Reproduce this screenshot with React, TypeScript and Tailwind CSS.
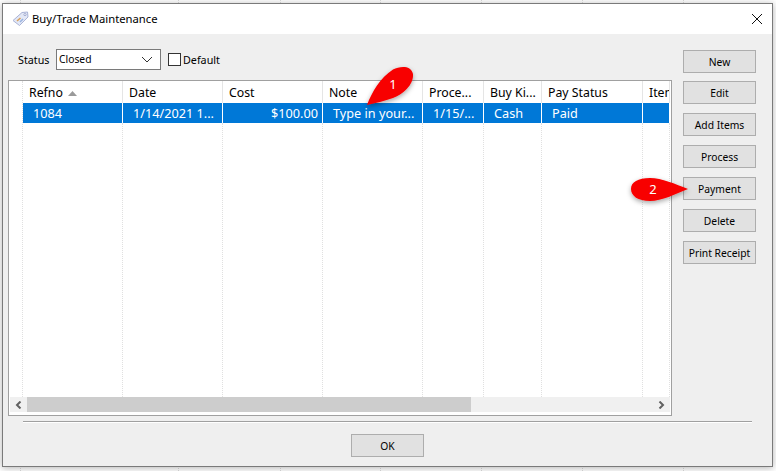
const font = { fontFamily: '"Noto Sans", sans-serif' };

const columns = [
  { label: "Refno", value: "1084", w: "w-[100px]", align: "pl-[10px]", sort: true },
  { label: "Date", value: "1/14/2021 1...", w: "w-[100px]", align: "pl-[10px]" },
  { label: "Cost", value: "$100.00", w: "w-[100px]", align: "justify-end pr-1" },
  { label: "Note", value: "Type in your...", w: "w-[100px]", align: "pl-[10px]" },
  { label: "Proce...", value: "1/15/...", w: "w-[61px]", align: "pl-[10px]" },
  { label: "Buy Ki...", value: "Cash", w: "w-[58px]", align: "pl-[10px]" },
  { label: "Pay Status", value: "Paid", w: "w-[101px]", align: "pl-[10px]" },
  { label: "Item", value: "", w: "w-[27px]", align: "pl-[10px]" },
];

const gridLines = ["left-[20px]", "left-[178px]", "left-[280px]", "left-[380px]", "left-[481px]", "left-[582px]", "left-[683px]"];

function Btn({ children }: { children: React.ReactNode }) {
  return (
    <button className="w-[73px] h-[23px] pt-[2px] flex items-center justify-center border border-[#adadad] bg-[#e1e1e1] text-[10.3px] text-black whitespace-nowrap">
      {children}
    </button>
  );
}

function TagIcon() {
  return (
    <svg width="17" height="16" viewBox="0 0 17 16" className="shrink-0">
      <path d="M1 9.5 10 1.5 15.5 1 16 6 7.5 14.5Z" fill="#e3e8f6" stroke="#a9b3d6" strokeWidth="1" />
      <circle cx="13" cy="3.6" r="1.1" fill="#fff" stroke="#8f9bc5" strokeWidth="0.8" />
      <path d="M5 10 8.5 7" stroke="#d9a05a" strokeWidth="1.6" />
      <path d="M8 11 11 8" stroke="#9bb4e0" strokeWidth="1.6" />
    </svg>
  );
}

export default function App() {
  return (
    <div className="relative w-[776px] h-[471px] overflow-hidden bg-white pt-[3px] pl-[2px]" style={font}>
      {gridLines.map((l) => (
        <span key={l} className={`absolute ${l} top-0 h-[471px] border-l border-dotted border-[#dcdcdc]`} />
      ))}
      <div className="relative w-[771px] h-[464px] flex flex-col border border-[#7a7a7a] bg-[#efefef] shadow-[0_1px_7px_rgba(0,0,0,0.3)] text-black">
        <div className="h-[30px] shrink-0 bg-white flex items-center pl-[9px] pr-[9px] gap-[3px]">
          <TagIcon />
          <span className="text-[11.25px] flex-1">Buy/Trade Maintenance</span>
          <svg width="12" height="12" viewBox="0 0 12 12">
            <path d="M1 1 11 11M11 1 1 11" stroke="#111" strokeWidth="1" fill="none" />
          </svg>
        </div>

        <div className="flex flex-1 min-h-0 pl-[5px] pt-[15px]">
          <div className="w-[664px] flex flex-col">
            <div className="h-[21px] flex items-center pl-[10px] text-[10.75px]">
              <span className="w-[38px] pt-[2px]">Status</span>
              <div className="w-[105px] h-[21px] border border-[#7a7a7a] bg-white flex items-center justify-between pl-[2px] pr-[7px]">
                <span className="text-[10.3px]">Closed</span>
                <svg width="12" height="7" viewBox="0 0 12 7">
                  <path d="M1 1 6 6 11 1" stroke="#333" fill="none" />
                </svg>
              </div>
              <span className="w-[13px] h-[13px] border border-[#333] bg-white ml-[7px]" />
              <span className="ml-[2px] pt-[2px]">Default</span>
            </div>

            <div className="mt-[10px] h-[336px] border border-[#a0a0a0] bg-white flex flex-col p-[1px] pt-0">
              <div className="flex flex-1 min-h-0">
                <div className="w-[13px] shrink-0 border-r border-dotted border-[#e0e0e0]" />
                <div className="flex-1 flex flex-col overflow-hidden">
                  <div className="flex h-[22px] shrink-0 text-[12.3px]">
                    {columns.map((c) => (
                      <div key={c.label} className={`${c.w} shrink-0 border-r border-[#e5e5e5] flex items-center pl-[6px] pt-[2px] overflow-hidden whitespace-nowrap`}>
                        <span>{c.label}</span>
                        {c.sort && (
                          <svg width="9" height="5" viewBox="0 0 9 5" className="ml-[5px]">
                            <path d="M4.5 0 9 5H0Z" fill="#9a9a9a" />
                          </svg>
                        )}
                      </div>
                    ))}
                  </div>
                  <div className="flex h-[20px] shrink-0 text-[12.7px] text-white">
                    {columns.map((c) => (
                      <div key={c.label} className={`${c.w} shrink-0 bg-[#0078d7] border-r border-white flex items-center ${c.align} pt-[1px] overflow-hidden whitespace-nowrap`}>
                        {c.value}
                      </div>
                    ))}
                  </div>
                  <div className="flex flex-1">
                    {columns.map((c) => (
                      <div key={c.label} className={`${c.w} shrink-0 border-r border-dotted border-[#e0e0e0]`} />
                    ))}
                  </div>
                </div>
              </div>
              <div className="h-[15px] mb-[2px] shrink-0 bg-[#f0f0f0] flex items-stretch">
                <div className="w-[17px] flex items-center justify-center">
                  <svg width="7" height="8" viewBox="0 0 7 8">
                    <path d="M5.5 .5 2 4 5.5 7.5" stroke="#606060" strokeWidth="2" fill="none" />
                  </svg>
                </div>
                <div className="w-[444px] bg-[#cdcdcd]" />
                <div className="flex-1 flex items-center justify-end pr-[5px]">
                  <svg width="7" height="8" viewBox="0 0 7 8">
                    <path d="M1.5 .5 5 4 1.5 7.5" stroke="#606060" strokeWidth="2" fill="none" />
                  </svg>
                </div>
              </div>
            </div>
          </div>

          <div className="ml-[11px] flex flex-col gap-[9px] pt-[1px]">
            <div className="mb-[-1px]">
              <Btn>New</Btn>
            </div>
            <Btn>Edit</Btn>
            <Btn>Add Items</Btn>
            <Btn>Process</Btn>
            <Btn>Payment</Btn>
            <Btn>Delete</Btn>
            <Btn>Print Receipt</Btn>
          </div>
        </div>

        <div className="h-[45px] shrink-0 flex flex-col items-center">
          <div className="w-[729px] h-[2px] border-t border-[#a0a0a0] bg-white" />
          <div className="mt-[11px]">
            <Btn>OK</Btn>
          </div>
        </div>
      </div>

      <svg className="absolute inset-0 pointer-events-none" width="776" height="471" viewBox="0 0 776 471">
        <defs>
          <filter id="s" x="-30%" y="-30%" width="160%" height="170%">
            <feDropShadow dx="0" dy="2" stdDeviation="2.5" floodColor="#000" floodOpacity="0.35" />
          </filter>
        </defs>
        <g filter="url(#s)" fill="#f80000">
          <path d="M367 105C372 92 380 78 393 69.5 400 66 411 65 413 74 414 85 402 95 393 98 385 101 375 103 367 105Z" />
          <path d="M688 189C675 184 662 178 650 178 638 178 631 182 631 189 631 196 638 201 650 201 662 201 675 194 688 189Z" />
        </g>
        <text x="393" y="89" textAnchor="middle" fontSize="13" fill="#fff" style={font}>1</text>
        <text x="653" y="194" textAnchor="middle" fontSize="13" fill="#fff" style={font}>2</text>
      </svg>
    </div>
  );
}
